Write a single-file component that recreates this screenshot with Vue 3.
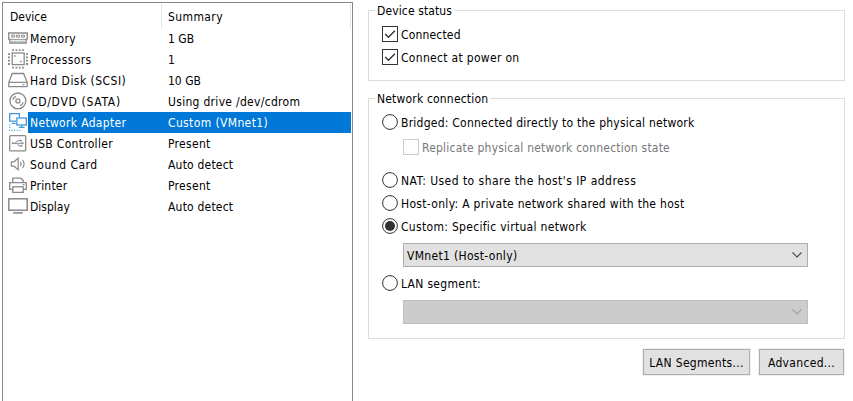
<script setup>
import { ref } from 'vue'

const devices = [
  { id: 'memory', name: 'Memory', summary: '1 GB', track: [0.35, 0] },
  { id: 'cpu', name: 'Processors', summary: '1', track: [0.4, 0] },
  { id: 'disk', name: 'Hard Disk (SCSI)', summary: '10 GB', track: [0.47, 0] },
  { id: 'cd', name: 'CD/DVD (SATA)', summary: 'Using drive /dev/cdrom', track: [0.7, 0.3] },
  { id: 'net', name: 'Network Adapter', summary: 'Custom (VMnet1)', track: [0.33, 0.37] },
  { id: 'usb', name: 'USB Controller', summary: 'Present', track: [0.3, 0.3] },
  { id: 'sound', name: 'Sound Card', summary: 'Auto detect', track: [0.5, 0.2] },
  { id: 'printer', name: 'Printer', summary: 'Present', track: [0.2, 0.3] },
  { id: 'display', name: 'Display', summary: 'Auto detect', track: [0, 0.2] },
]
const selected = ref('net')
const mode = ref('custom')
const connected = ref(true)
const powerOn = ref(true)
</script>

<template>
  <main class="settings">
    <section class="devices">
      <div class="head">
        <div class="col-device">Device</div>
        <div class="col-summary">Summary</div>
      </div>
      <div
        v-for="d in devices"
        :key="d.id"
        class="row"
        :class="{ selected: d.id === selected }"
        @click="selected = d.id"
      >
        <svg class="icon" viewBox="0 0 20 21" fill="none" stroke="#8a8a8a" stroke-width="1.3">
          <g v-if="d.id === 'memory'">
            <path d="M.7 5H19.3V11.2H18.2V15H1.8V11.2H.7Z" />
            <path d="M3.6 7.2h3v2h-3zM8.5 7.2h3v2h-3zM13.4 7.2h3v2h-3z" stroke-width="1" />
            <path d="M2 11.7H18" stroke-width="1" />
            <path d="M3.5 13.6H8.5M10.5 13.6H17" stroke-width="1.2" stroke-dasharray="1 1" />
          </g>
          <g v-else-if="d.id === 'cpu'">
            <rect x="4.2" y="4" width="12" height="11.6" />
            <path d="M4.2 1.2H16.2M4.2 18.6H16.2" stroke-width="1.8" stroke-dasharray="1.8 1.5" />
            <path d="M1 4.2V16.2M19 4.2V16.2" stroke-width="2" stroke-dasharray="1.8 1.5" />
            <path d="M6 6.2h1.6v1.6H6zM12 11.7h1.6v1.6H12z" fill="#8a8a8a" stroke="none" />
          </g>
          <g v-else-if="d.id === 'disk'">
            <path d="M4.2 3.5H15.6L19.2 12.4V16.7H.8V12.4Z" stroke-linejoin="round" />
            <path d="M1 12.4H19M14.5 14.6h2" />
          </g>
          <g v-else-if="d.id === 'cd'">
            <circle cx="9.9" cy="9.9" r="7.9" />
            <circle cx="9.9" cy="9.9" r="2" />
            <path d="M4.8 8.6Q5.5 6.3 8 5.3M15.2 11.4Q14.3 13.9 12 14.6" />
          </g>
          <g v-else-if="d.id === 'net'" stroke="#3d98d6" stroke-width="1.3">
            <path d="M8 9.2H1.7V1.7H11.4V5M3.8 11.4H7.5" />
            <rect x="8.9" y="6" width="9.4" height="7" fill="#fff" />
            <path d="M13.6 13V15M10.8 15.4H16.5" />
            <path d="M1.7 12.5V18.4H13" stroke-width="1.2" stroke-dasharray="1 1.6" />
          </g>
          <g v-else-if="d.id === 'usb'">
            <rect x="1.7" y="2.7" width="16" height="15.2" rx="1" />
            <path d="M4 10.3H15M7 10.3L9.3 7.7H12.4M8.8 10.3L10.8 12.8H13" stroke-width="1" />
            <circle cx="4.9" cy="10.3" r="1" fill="#8a8a8a" stroke="none" />
            <path d="M13.8 8.8 16.1 10.3 13.8 11.8ZM12 6.8h1.7v1.7H12zM12.5 12h1.7v1.7h-1.7z" fill="#8a8a8a" stroke="none" />
          </g>
          <g v-else-if="d.id === 'sound'" stroke-width="1.2">
            <path d="M3.3 7.8H6L10.2 4V15.8L6 12.2H3.3Z" />
            <path d="M12.4 7.8Q14 10 12.4 12.2M14.6 6Q17.6 10 14.6 14" />
          </g>
          <g v-else-if="d.id === 'printer'">
            <path d="M4.8 7.5V3.2H12.8L15.2 5.4V7.5M4.8 14.4H1.7V7.7H18.3V14.4H15.2" />
            <rect x="4.8" y="11.8" width="10.4" height="5.6" />
            <path d="M14.8 9.7H16.5" />
          </g>
          <g v-else>
            <rect x=".8" y="2.8" width="18.4" height="11.4" stroke-width="1.5" />
            <path d="M5.2 16.9H14.8" stroke-width="1.6" />
          </g>
        </svg>
        <span class="name" :style="{ letterSpacing: d.track[0] + 'px' }">{{ d.name }}</span>
        <span class="summary" :style="{ letterSpacing: d.track[1] + 'px' }">{{ d.summary }}</span>
      </div>
    </section>

    <section class="options">
      <fieldset class="group status">
        <legend class="status-title">Device status</legend>
        <label class="choice">
          <input v-model="connected" type="checkbox" />
          <svg class="mark" viewBox="0 0 16 16"><rect x=".5" y=".5" width="15" height="15" /><path v-if="connected" class="tick" d="M3.2 8 6.4 11.2 12.9 4.7" /></svg>
          <span class="connected">Connected</span>
        </label>
        <label class="choice">
          <input v-model="powerOn" type="checkbox" />
          <svg class="mark" viewBox="0 0 16 16"><rect x=".5" y=".5" width="15" height="15" /><path v-if="powerOn" class="tick" d="M3.2 8 6.4 11.2 12.9 4.7" /></svg>
          <span>Connect at power on</span>
        </label>
      </fieldset>

      <fieldset class="group network">
        <legend>Network connection</legend>
        <label class="choice bridged">
          <input v-model="mode" type="radio" value="bridged" />
          <svg class="mark" viewBox="0 0 16 16"><circle cx="8" cy="8" r="7.4" /><circle v-if="mode === 'bridged'" class="dot" cx="8" cy="8" r="5" /></svg>
          <span>Bridged: Connected directly to the physical network</span>
        </label>
        <label class="choice replicate">
          <input type="checkbox" disabled />
          <svg class="mark" viewBox="0 0 16 16"><rect x=".5" y=".5" width="15" height="15" /></svg>
          <span>Replicate physical network connection state</span>
        </label>
        <label class="choice">
          <input v-model="mode" type="radio" value="nat" />
          <svg class="mark" viewBox="0 0 16 16"><circle cx="8" cy="8" r="7.4" /><circle v-if="mode === 'nat'" class="dot" cx="8" cy="8" r="5" /></svg>
          <span class="nat">NAT: Used to share the host's IP address</span>
        </label>
        <label class="choice">
          <input v-model="mode" type="radio" value="host" />
          <svg class="mark" viewBox="0 0 16 16"><circle cx="8" cy="8" r="7.4" /><circle v-if="mode === 'host'" class="dot" cx="8" cy="8" r="5" /></svg>
          <span>Host-only: A private network shared with the host</span>
        </label>
        <label class="choice">
          <input v-model="mode" type="radio" value="custom" />
          <svg class="mark" viewBox="0 0 16 16"><circle cx="8" cy="8" r="7.4" /><circle v-if="mode === 'custom'" class="dot" cx="8" cy="8" r="5" /></svg>
          <span>Custom: Specific virtual network</span>
        </label>
        <div class="combo">
          <span>VMnet1 (Host-only)</span>
          <svg viewBox="0 0 10 6"><path d="M.5.5 5 5 9.5.5" /></svg>
        </div>
        <label class="choice">
          <input v-model="mode" type="radio" value="lan" />
          <svg class="mark" viewBox="0 0 16 16"><circle cx="8" cy="8" r="7.4" /><circle v-if="mode === 'lan'" class="dot" cx="8" cy="8" r="5" /></svg>
          <span>LAN segment:</span>
        </label>
        <div class="combo disabled">
          <span></span>
          <svg viewBox="0 0 10 6"><path d="M.5.5 5 5 9.5.5" /></svg>
        </div>
      </fieldset>

      <div class="actions">
        <button class="lan-button">LAN Segments...</button>
        <button class="adv-button">Advanced...</button>
      </div>
    </section>
  </main>
</template>

<style>
body {
  margin: 0;
  background: #fff;
  overflow: hidden;
}
</style>

<style scoped>
.settings {
  box-sizing: border-box;
  width: 853px;
  height: 401px;
  padding: 2px 8px 0 2px;
  display: flex;
  gap: 15px;
  background: #fff;
  color: #000;
  font: 12px/16px Tahoma, "DejaVu Sans Condensed", "DejaVu Sans", sans-serif;
  font-stretch: condensed;
  white-space: nowrap;
  cursor: default;
}
.devices {
  box-sizing: border-box;
  width: 351px;
  border: 1px solid #828790;
  border-bottom: 0;
  padding-right: 1px;
}
.head {
  height: 25px;
  display: flex;
}
.head > div {
  box-sizing: border-box;
  height: 24px;
  margin-top: 1px;
  line-height: 26px;
  border-right: 1px solid #e5e5e5;
}
.col-device {
  width: 159px;
  padding-left: 7px;
}
.col-summary {
  width: 189px;
  padding-left: 6px;
  letter-spacing: 0.4px;
}
.row {
  height: 21px;
  padding-left: 5px;
  display: flex;
  line-height: 22px;
}
.icon {
  width: 20px;
  height: 21px;
  flex: none;
}
.name {
  width: 136px;
  padding-left: 2px;
}
.summary {
  flex: 1;
  padding-left: 2px;
}
.selected .name,
.selected .summary {
  background: #0078d7;
  color: #fff;
}
.options {
  width: 477px;
  padding-top: 1px;
}
.group {
  box-sizing: border-box;
  min-width: 0;
  margin: 0;
  border: 1px solid #dcdcdc;
  padding: 0 36px 0 13px;
}
legend {
  box-sizing: border-box;
  height: 15px;
  margin-left: -7px;
  padding: 1px 2px 0;
  line-height: 15px;
  letter-spacing: 0.18px;
}
.status-title {
  letter-spacing: 0.12px;
}
.status {
  height: 78px;
}
.network {
  height: 248px;
  margin-top: 10px;
}
.choice {
  display: flex;
  align-items: center;
  gap: 3px;
  height: 16px;
  margin-bottom: 7px;
  letter-spacing: 0.31px;
}
.choice span {
  padding-top: 2px;
}
.status .choice:first-of-type,
.network .choice:first-of-type {
  margin-top: 8px;
}
.choice input {
  display: none;
}
.connected {
  letter-spacing: 0.17px;
}
.nat {
  letter-spacing: 0.46px;
}
.mark {
  width: 16px;
  height: 16px;
  flex: none;
  fill: #fff;
  stroke: #333;
  stroke-width: 1;
}
.mark .tick {
  fill: none;
  stroke-width: 1.4;
}
.mark .dot {
  fill: #333;
  stroke: none;
}
.bridged {
  margin-bottom: 9px;
  letter-spacing: 0.24px;
}
.replicate {
  margin: 0 0 17px 21px;
  color: #787878;
  letter-spacing: 0.22px;
}
.replicate .mark {
  stroke: #ccc;
}
.combo {
  box-sizing: border-box;
  width: 405px;
  height: 24px;
  margin: 9px 0 8px 21px;
  padding: 0 5px 0 3px;
  display: flex;
  align-items: center;
  justify-content: space-between;
  background: #e1e1e1;
  border: 1px solid #adadad;
  letter-spacing: 0.32px;
}
.combo span {
  padding-top: 2px;
}
.combo svg {
  width: 10px;
  height: 6px;
  fill: none;
  stroke: #444;
  stroke-width: 1.1;
}
.combo.disabled {
  background: #ccc;
  border-color: #bfbfbf;
}
.combo.disabled svg {
  stroke: #a0a0a0;
}
.actions {
  display: flex;
  justify-content: flex-end;
  gap: 9px;
  padding: 10px 1px 0 0;
}
.actions button {
  box-sizing: border-box;
  height: 26px;
  padding: 2px 0 0;
  background: #e1e1e1;
  border: 1px solid #adadad;
  box-shadow: 0 0 0 1px #f0f0f0;
  color: #000;
  font: inherit;
  letter-spacing: 0.32px;
}
.lan-button {
  width: 107px;
}
.adv-button {
  width: 85px;
}
</style>
